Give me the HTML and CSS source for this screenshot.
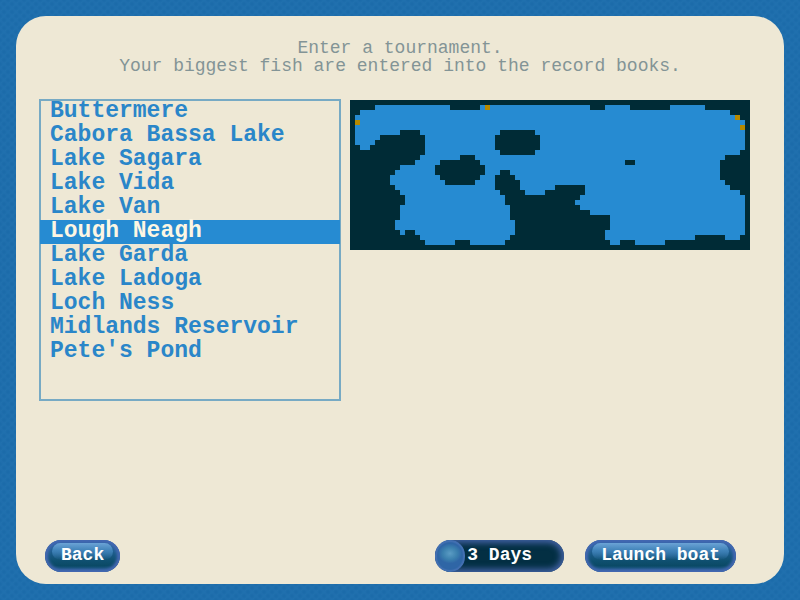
FILE: index.html
```html
<!DOCTYPE html>
<html lang="en">
<head>
<meta charset="utf-8">
<title>Enter a tournament</title>
<link rel="stylesheet" href="styles.css">
</head>
<body>
<form class="panel">
  <header class="intro">
    <p>Enter a tournament.<br>Your biggest fish are entered into the record books.</p>
  </header>
  <main class="content">
    <fieldset class="lakes" aria-label="Lake">
      <label class="lake"><input type="radio" name="lake"><span>Buttermere</span></label>
      <label class="lake"><input type="radio" name="lake"><span>Cabora Bassa Lake</span></label>
      <label class="lake"><input type="radio" name="lake"><span>Lake Sagara</span></label>
      <label class="lake"><input type="radio" name="lake"><span>Lake Vida</span></label>
      <label class="lake"><input type="radio" name="lake"><span>Lake Van</span></label>
      <label class="lake"><input type="radio" name="lake" checked><span>Lough Neagh</span></label>
      <label class="lake"><input type="radio" name="lake"><span>Lake Garda</span></label>
      <label class="lake"><input type="radio" name="lake"><span>Lake Ladoga</span></label>
      <label class="lake"><input type="radio" name="lake"><span>Loch Ness</span></label>
      <label class="lake"><input type="radio" name="lake"><span>Midlands Reservoir</span></label>
      <label class="lake"><input type="radio" name="lake"><span>Pete's Pond</span></label>
    </fieldset>
    <!-- One unit per map cell; every row of water is a run of strokes. -->
    <svg class="map" viewBox="0 -0.5 80 30" shape-rendering="crispEdges" role="img" aria-label="Map of the lake">
      <path class="water" d="M5 1H20M26 1H48M51 1H56M64 1H71
        M2 2H76 M1 3H78 M1 4H79 M1 5H79
        M1 6H10M14 6H30M37 6H79
        M1 7H6M15 7H29M38 7H79
        M1 8H5M15 8H29M38 8H79
        M2 9H4M15 9H29M38 9H79
        M15 10H30M37 10H78
        M14 11H22M25 11H75
        M13 12H18M26 12H55M57 12H74
        M10 13H17M27 13H74
        M9 14H17M27 14H30M32 14H74
        M8 15H18M26 15H29M33 15H74
        M8 16H19M25 16H29M34 16H75
        M9 17H29M34 17H41M47 17H76
        M10 18H30M35 18H39M47 18H78
        M11 19H31M46 19H79
        M11 20H31M45 20H79
        M10 21H32M46 21H79
        M10 22H32M48 22H79
        M10 23H32M52 23H79
        M9 24H33M52 24H79
        M9 25H33M52 25H79
        M10 26H11M13 26H33M51 26H79
        M14 27H32M51 27H69M75 27H78
        M15 28H21M24 28H31M52 28H54M57 28H63"/>
      <path class="port" d="M27 1h1M77 3h1M1 4h1M78 5h1"/>
    </svg>
  </main>
  <footer class="actions">
    <button class="pill" type="button">Back</button>
    <div class="duration">
      <input id="days" type="range" min="3" max="7" value="3" aria-label="Tournament length">
      <output for="days">3 Days</output>
    </div>
    <button class="pill" type="submit">Launch boat</button>
  </footer>
</form>
</body>
</html>
```

FILE: styles.css
```css
* {
  box-sizing: border-box;
}

body {
  margin: 0;
  min-height: 100vh;
  padding: 16px;
  display: flex;
  background-color: #2070ae;
  background-image:
    radial-gradient(circle, #1c6baa 1px, transparent 3px),
    radial-gradient(circle, #1c6baa 1px, transparent 3px);
  background-size: 8px 8px;
  background-position: 0 0, 4px 4px;
  font-family: "Courier New", "Liberation Mono", monospace;
  font-size: 18px;
}

.panel {
  flex: 1;
  display: flex;
  flex-direction: column;
  padding: 23px 24px 12px;
  border-radius: 30px;
  background: #eee8d5;
}

.intro {
  margin-bottom: 25px;
  color: #839496;
  line-height: 18px;
  text-align: center;
}

.intro p {
  margin: 0;
}

.content {
  display: grid;
  grid-template-columns: 300px minmax(0, 400px);
  align-items: start;
  gap: 10px;
}

.lakes {
  min-height: 300px;
  margin: 0;
  padding: 0;
  border: 0;
  box-shadow: 0 0 0 1px #77aac4, inset 0 0 0 1px #77aac4;
  color: #2a86c9;
  font-size: 23px;
  font-weight: bold;
  line-height: 24px;
}

.lake {
  display: block;
  cursor: pointer;
}

.lake input {
  position: absolute;
  margin: 0;
  opacity: 0;
}

.lake span {
  display: block;
  height: 24px;
  padding: 0 10px;
  line-height: 22px;
}

.lake input:checked + span {
  background: #268bd2;
  color: #fdf6e3;
}

.map {
  display: block;
  width: 100%;
  background: #002b36;
}

.map path {
  fill: none;
  stroke-width: 1;
}

.water {
  stroke: #268bd2;
}

.port {
  stroke: #b58900;
}

.actions {
  display: flex;
  gap: 21px;
  margin-top: auto;
  padding: 0 24px 0 5px;
}

.pill {
  position: relative;
  isolation: isolate;
  height: 32px;
  padding: 0 16px 2px;
  border: 0;
  border-radius: 16px;
  background: linear-gradient(#2c64a6, #1f5f90 35%, #0f5070 65%, #0b4a66 80%, #1f5a8c);
  box-shadow: inset 0 0 3px 3px #4468b2;
  color: #fdfefe;
  font: bold 18px "Courier New", "Liberation Mono", monospace;
}

.pill::before {
  content: "";
  position: absolute;
  z-index: -1;
  inset: 3px 7px 12px;
  border-radius: 10px;
  background: linear-gradient(#6ba3d6, #3f82b8 45%, transparent);
}

.duration {
  position: relative;
  width: 129px;
  height: 32px;
  margin-left: auto;
}

.duration input {
  appearance: none;
  display: block;
  width: 100%;
  height: 32px;
  margin: 0;
  border-radius: 16px;
  background: #032f43;
  box-shadow: inset 0 0 6px 3px #4463a6;
}

.duration input::-webkit-slider-thumb {
  appearance: none;
  width: 30px;
  height: 32px;
  border-radius: 16px;
  background:
    radial-gradient(ellipse 12px 10px at 50% 42%, #5b9cc4, #3b80ae 60%, transparent),
    #2f66a6;
  box-shadow: inset 0 0 1px 2px #4470b2;
}

.duration output {
  position: absolute;
  inset: 0;
  color: #fdfefe;
  font-weight: bold;
  line-height: 30px;
  text-align: center;
  pointer-events: none;
}
```
